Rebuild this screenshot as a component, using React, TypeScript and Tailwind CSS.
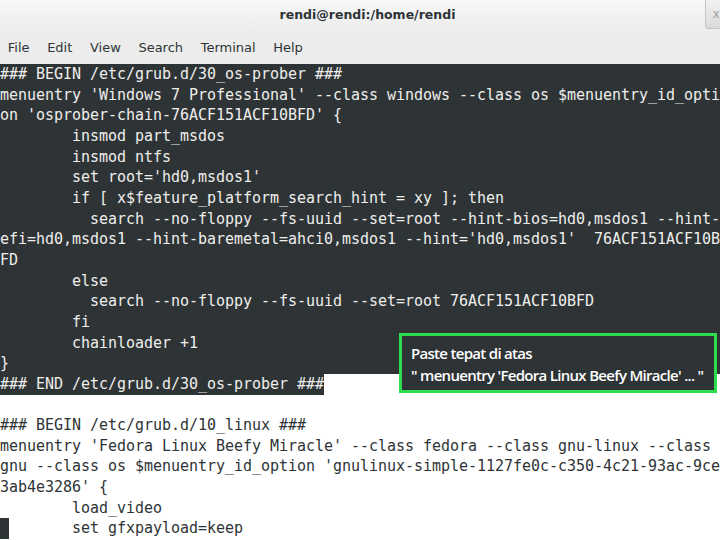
import React from 'react';

const selected = [
  '### BEGIN /etc/grub.d/30_os-prober ###',
  "menuentry 'Windows 7 Professional' --class windows --class os $menuentry_id_opti",
  "on 'osprober-chain-76ACF151ACF10BFD' {",
  '        insmod part_msdos',
  '        insmod ntfs',
  "        set root='hd0,msdos1'",
  '        if [ x$feature_platform_search_hint = xy ]; then',
  '          search --no-floppy --fs-uuid --set=root --hint-bios=hd0,msdos1 --hint-',
  "efi=hd0,msdos1 --hint-baremetal=ahci0,msdos1 --hint='hd0,msdos1'  76ACF151ACF10B",
  'FD',
  '        else',
  '          search --no-floppy --fs-uuid --set=root 76ACF151ACF10BFD',
  '        fi',
  '        chainloader +1',
  '}',
];

const rest = [
  '',
  '### BEGIN /etc/grub.d/10_linux ###',
  "menuentry 'Fedora Linux Beefy Miracle' --class fedora --class gnu-linux --class ",
  "gnu --class os $menuentry_id_option 'gnulinux-simple-1127fe0c-c350-4c21-93ac-9ce",
  "3ab4e3286' {",
  '        load_video',
];

const menus = ['File', 'Edit', 'View', 'Search', 'Terminal', 'Help'];

const App: React.FC = () => {
  return (
    <div className="w-[720px] h-[540px] overflow-hidden bg-white flex flex-col relative">
      {/* title bar */}
      <div className="h-[31px] flex items-center bg-gradient-to-b from-[#f8f8f8] to-[#ececec] shrink-0">
        <div className="flex-1 text-center text-[12.5px] font-bold text-[#2e3436] font-['DejaVu_Sans',sans-serif] pl-[30px]">
          rendi@rendi:/home/rendi
        </div>
        <div className="w-[26px] h-[29px] self-start mr-[-11px] rounded-b-[4px] border border-t-0 border-[#c4c4c4] bg-gradient-to-b from-[#f2f2f2] to-[#dadada] flex items-center pl-[7px] text-[12px] text-[#9a9a9a]">
          x
        </div>
      </div>

      {/* menu bar */}
      <div className="h-[33px] flex items-center bg-[#ececec] ml-[-1px] shrink-0 font-['DejaVu_Sans',sans-serif] text-[13px] text-[#2e3436]">
        {menus.map((m) => (
          <span key={m} className="px-[8.8px]">
            {m}
          </span>
        ))}
      </div>

      {/* terminal */}
      <div className="flex-1 font-['DejaVu_Sans_Mono',monospace] text-[15px] leading-[20.67px] tracking-[-0.03px] whitespace-pre text-[#2e3436]">
        <div className="bg-[#2e3436] text-[#eeeeec]">
          {selected.map((l, i) => (
            <div key={i} className="h-[20.67px]">
              {l}
            </div>
          ))}
        </div>
        <div className="h-[20.67px]">
          <span className="inline-block bg-[#2e3436] text-[#eeeeec] h-[20.67px]">### END /etc/grub.d/30_os-prober ###</span>
        </div>
        {rest.map((l, i) => (
          <div key={i} className="h-[20.67px]">
            {l}
          </div>
        ))}
        <div className="h-[20.67px] flex">
          <span className="inline-block w-[9px] h-[20.67px] bg-[#2e3436]" />
          <span>{'       set gfxpayload=keep'}</span>
        </div>
      </div>

      {/* annotation */}
      <div className="absolute left-[399px] top-[333px] w-[318px] h-[60px] border-[3px] border-[#2ddc4a] bg-[#2e3436] pl-[9px] pt-[6px] text-white font-['Open_Sans',sans-serif] font-semibold text-[15px] leading-[22px] tracking-[-0.7px]">
        <div>Paste tepat di atas</div>
        <div>" menuentry 'Fedora Linux Beefy Miracle' ... "</div>
      </div>
    </div>
  );
};

export default App;
